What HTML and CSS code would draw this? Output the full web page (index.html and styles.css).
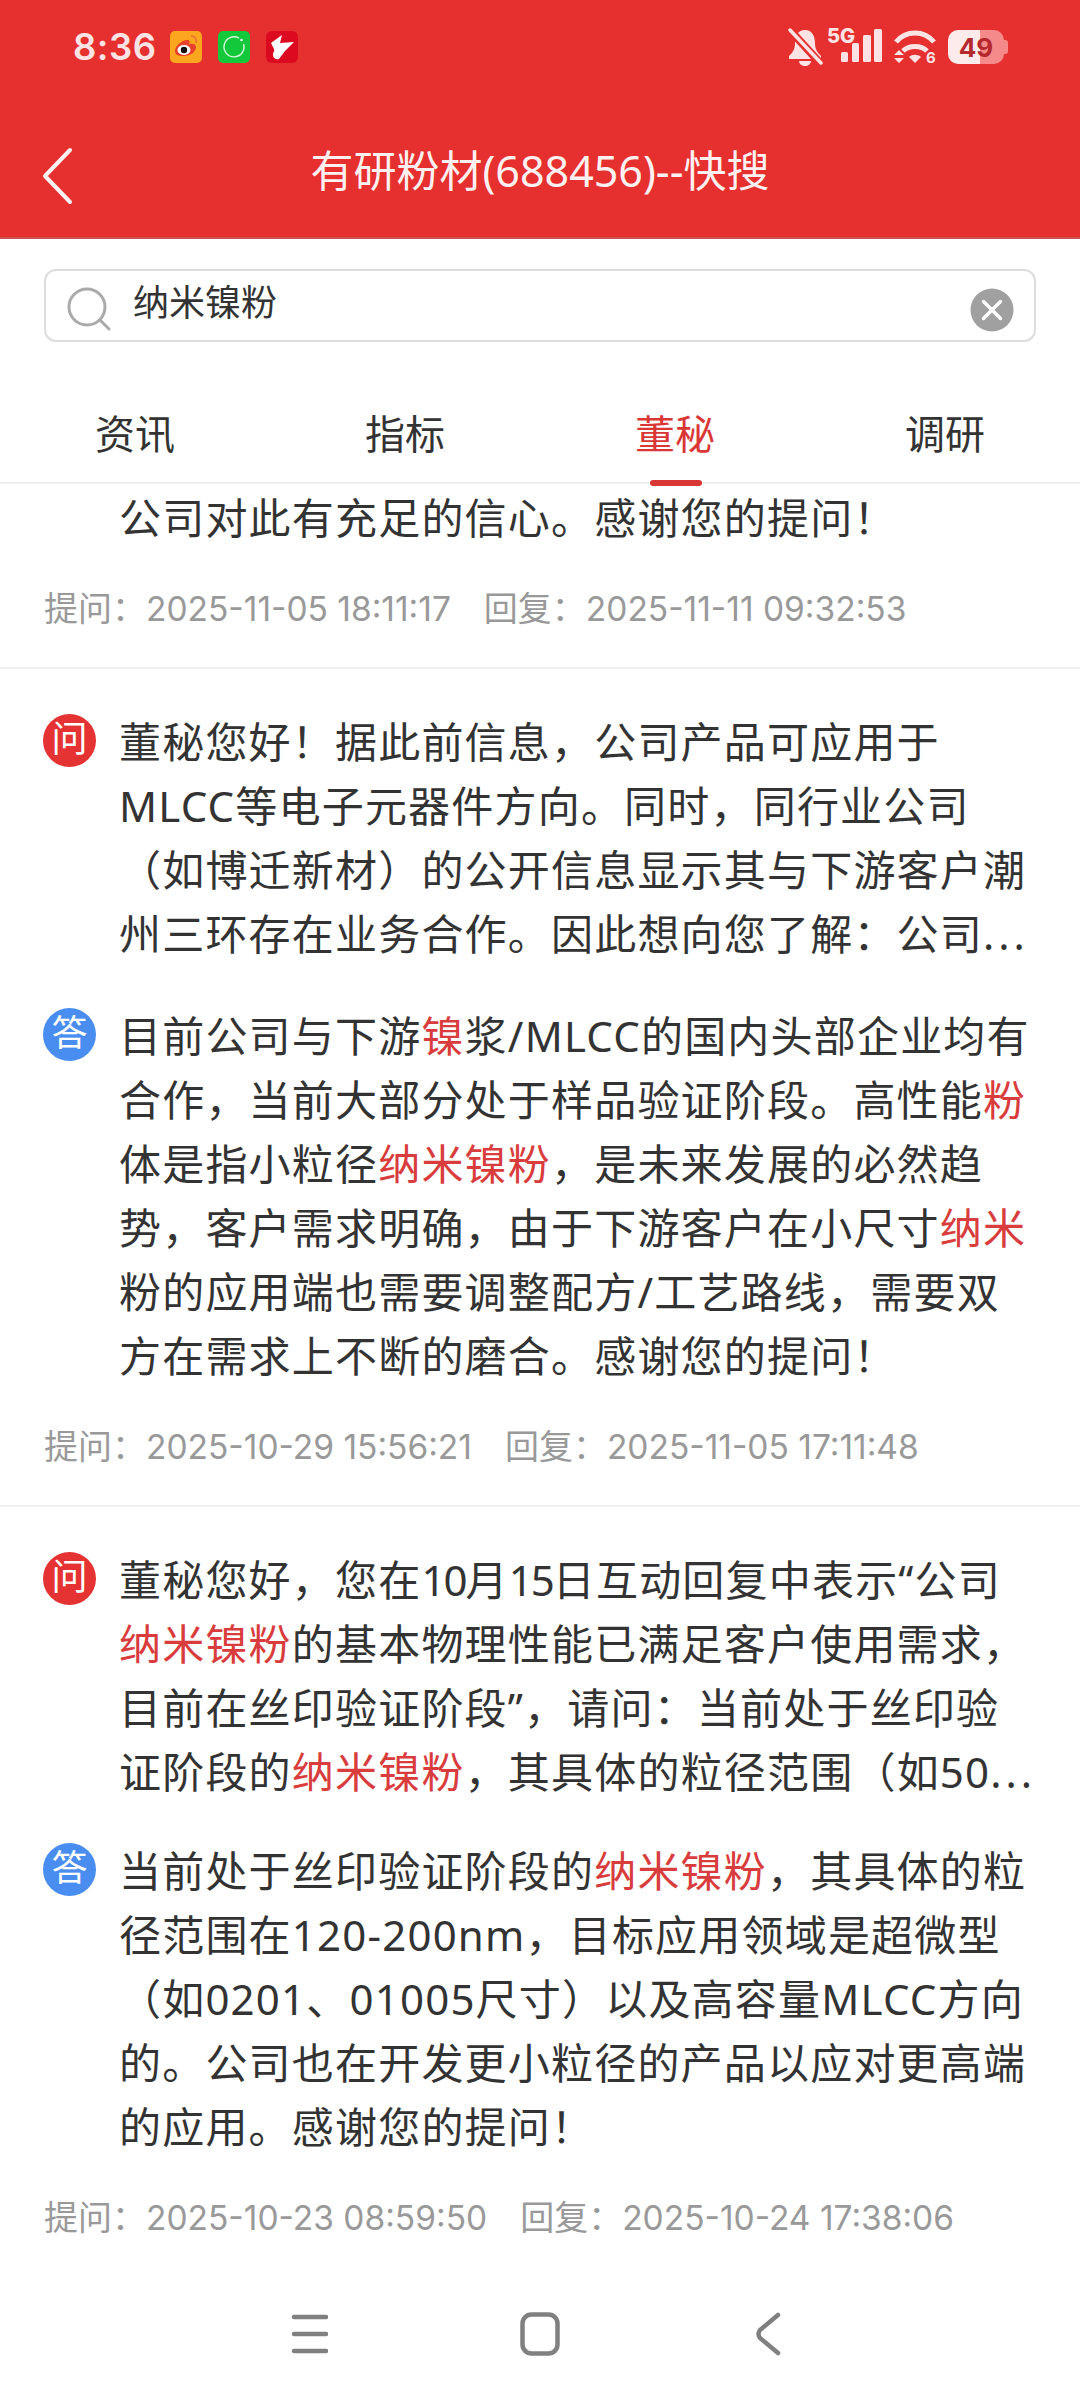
FILE: index.html
```html
<!DOCTYPE html>
<html lang="zh-CN">
  <head>
    <meta charset="utf-8" />
    <title>有研粉材(688456)--快搜</title>
    <link rel="stylesheet" href="styles.css">
  </head>
  <body>
    <header class="app-bar">
      <div class="status-bar">
        <span class="time">8:36</span>
        <div class="app-icons">
          <svg width="32" height="32" viewBox="0 0 32 32">
            <rect width="32" height="32" rx="5" fill="#fca51f"/>
            <path d="M5 20c0-5 7-11 12-11 3 0 3 2 2 4 4-1 7 0 7 3 0 5-6 9-12 9S5 24 5 20z" fill="#e8402c"/>
            <ellipse cx="14" cy="19" rx="6.5" ry="5" fill="#fff"/>
            <circle cx="14" cy="19" r="3.2" fill="#111"/>
            <path d="M21 5c4 0 6 3 5 7" fill="none" stroke="#ee7a2a" stroke-width="2"/>
          </svg>
          <svg width="32" height="32" viewBox="0 0 32 32">
            <rect width="32" height="32" rx="5" fill="#14c83c"/>
            <path d="M21 7.2A10 10 0 1 0 25.6 13" fill="none" stroke="#d4fadc" stroke-width="1.4"/>
            <circle cx="23.5" cy="9" r="1.3" fill="#e4fce9"/>
          </svg>
          <svg width="32" height="32" viewBox="0 0 32 32">
            <rect width="32" height="32" rx="6" fill="#dc0a20"/>
            <path d="M5 12l11-8-2 8 14-1-9 9-6 8c-3 1-6-1-6-4 0-3 2-4 1-6z" fill="#fff"/>
          </svg>
        </div>
        <div class="status-icons">
          <svg width="36" height="38" viewBox="0 0 36 38">
            <path d="M18 2c-7 0-10 6-10 13 0 6-2 9-6 13v3h32v-3c-4-4-6-7-6-13 0-7-3-13-10-13z" fill="#fde3e3"/>
            <path d="M12 33h12c0 3-3 5-6 5s-6-2-6-5z" fill="#fde3e3"/>
            <path d="M2 1l32 35" stroke="#e62f2f" stroke-width="8"/>
            <path d="M3 2l31 33" stroke="#fde3e3" stroke-width="3.5" stroke-linecap="round"/>
          </svg>
          <svg class="signal" width="56" height="48" viewBox="0 -5 56 48">
            <text x="0" y="15" class="net-label">5G</text>
            <rect x="14" y="24" width="7" height="10" rx="1.5"/>
            <rect x="25" y="15" width="7" height="19" rx="1.5"/>
            <rect x="36" y="7" width="8" height="27" rx="1.5"/>
            <rect x="47" y="1" width="8" height="33" rx="1.5"/>
          </svg>
          <svg class="wifi" width="46" height="38" viewBox="0 0 46 38">
            <path d="M3 14C13 2 31 2 41 14" fill="none" stroke="#fde3e3" stroke-width="5"/>
            <path d="M10 23C16 17 28 17 34 23" fill="none" stroke="#fde3e3" stroke-width="5"/>
            <path d="M16 29c3-3 9-3 12 0l-6 6z" fill="#fde3e3"/>
            <path d="M1 27l5-5 5 5zM1 30l5 5 5-5z" fill="#fde3e3"/>
            <text x="33" y="35" class="wifi-label">6</text>
          </svg>
          <div class="battery">
            <span class="battery-text">49</span>
          </div>
        </div>
      </div>
      <div class="toolbar">
        <svg class="back" width="34" height="60" viewBox="0 0 34 60">
          <path d="M30 4L5 30l25 26" fill="none" stroke="#fdf0f0" stroke-width="4" stroke-linecap="round" stroke-linejoin="round"/>
        </svg>
        <h1>有研粉材(688456)--快搜</h1>
      </div>
    </header>

    <div class="search-wrap">
      <div class="search-box">
        <svg width="46" height="46" viewBox="0 0 46 46">
          <circle cx="20" cy="20" r="18" fill="none" stroke="#aaa" stroke-width="3"/>
          <path d="M33 33l9 9" stroke="#aaa" stroke-width="3" stroke-linecap="round"/>
        </svg>
        <span class="search-text">纳米镍粉</span>
        <svg class="clear" width="44" height="44" viewBox="0 0 44 44">
          <circle cx="22" cy="22" r="21.5" fill="#a0a0a0"/>
          <path d="M13.5 13.5l17 17M30.5 13.5l-17 17" stroke="#fff" stroke-width="3.5" stroke-linecap="round"/>
        </svg>
      </div>
    </div>

    <nav class="tabs">
      <div class="tab">资讯</div>
      <div class="tab">指标</div>
      <div class="tab active">董秘</div>
      <div class="tab">调研</div>
    </nav>

    <main class="list">
      <section class="item partial">
        <div class="row">
          <div class="badge-space"></div>
          <p class="text">公司对此有充足的信心。感谢您的提问！</p>
        </div>
        <div class="meta">
          <span>提问：<span class="date">2025-11-05 18:11:17</span></span>
          <span>回复：<span class="date">2025-11-11 09:32:53</span></span>
        </div>
      </section>

      <section class="item">
        <div class="row">
          <div class="badge ask">问</div>
          <p class="text">董秘您好！据此前信息，公司产品可应用于<br>MLCC等电子元器件方向。同时，同行业公司<br>（如博迁新材）的公开信息显示其与下游客户潮<br>州三环存在业务合作。因此想向您了解：公司<span class="dots">...</span></p>
        </div>
        <div class="row answer">
          <div class="badge reply">答</div>
          <p class="text">目前公司与下游<em>镍</em>浆/MLCC的国内头部企业均有<br>合作，当前大部分处于样品验证阶段。高性能<em>粉</em><br>体是指小粒径<em>纳米镍粉</em>，是未来发展的必然趋<br>势，客户需求明确，由于下游客户在小尺寸<em>纳米</em><br>粉的应用端也需要调整配方/工艺路线，需要双<br>方在需求上不断的磨合。感谢您的提问！</p>
        </div>
        <div class="meta">
          <span>提问：<span class="date">2025-10-29 15:56:21</span></span>
          <span>回复：<span class="date">2025-11-05 17:11:48</span></span>
        </div>
      </section>

      <section class="item last">
        <div class="row">
          <div class="badge ask">问</div>
          <p class="text">董秘您好，您在<span class="tight">10</span>月<span class="tight">15</span>日互动回复中表示“公司<br><em>纳米镍粉</em>的基本物理性能已满足客户使用需求，<br>目前在丝印验证阶段”，请问：当前处于丝印验<br>证阶段的<em>纳米镍粉</em>，其具体的粒径范围（如50<span class="dots">...</span></p>
        </div>
        <div class="row answer">
          <div class="badge reply">答</div>
          <p class="text">当前处于丝印验证阶段的<em>纳米镍粉</em>，其具体的粒<br>径范围在120-200nm，目标应用领域是超微型<br>（如0201、01005尺寸）以及高容量MLCC方向<br>的。公司也在开发更小粒径的产品以应对更高端<br>的应用。感谢您的提问！</p>
        </div>
        <div class="meta">
          <span>提问：<span class="date">2025-10-23 08:59:50</span></span>
          <span>回复：<span class="date">2025-10-24 17:38:06</span></span>
        </div>
      </section>
    </main>

    <footer class="nav-bar">
      <svg width="38" height="40" viewBox="0 0 38 40">
        <path d="M4 3h32M4 20h32M4 37h32" stroke="#808080" stroke-width="4.5" stroke-linecap="round"/>
      </svg>
      <svg width="40" height="44" viewBox="0 0 40 44">
        <rect x="2.5" y="2.5" width="35" height="39" rx="9" fill="none" stroke="#808080" stroke-width="4.5"/>
      </svg>
      <svg class="nav-back" width="26" height="44" viewBox="0 0 26 44">
        <path d="M23 3L5 18q-3 4 0 8l18 15" fill="none" stroke="#808080" stroke-width="4.5" stroke-linecap="round"/>
      </svg>
    </footer>
  </body>
</html>
```

FILE: styles.css
```css
* {
  box-sizing: border-box;
}
html, body {
  margin: 0;
  padding: 0;
  width: 1080px;
  height: 2400px;
  overflow: hidden;
}
body {
  display: flex;
  flex-direction: column;
  background: #fff;
  color: #333;
  font-family: "Noto Sans", "Noto Sans CJK SC", sans-serif;
}
p, h1 {
  margin: 0;
  font-weight: normal;
}

/* red top area */
.app-bar {
  height: 239px;
  background: #e62f2f;
  border-bottom: 2px solid #c9544f;
}
.status-bar {
  height: 94px;
  display: flex;
  align-items: center;
  padding-left: 73px;
}
.time {
  width: 97px;
  font-family: Inter, sans-serif;
  font-weight: 600;
  font-size: 36.5px;
  letter-spacing: 0.5px;
  color: #fde3e3;
}
.app-icons {
  display: flex;
  gap: 16px;
}
.status-icons {
  margin-left: auto;
  margin-right: 72px;
  display: flex;
  align-items: center;
}
.signal {
  margin-left: 4px;
}
.signal rect {
  fill: #fde3e3;
}
.wifi {
  margin-left: 10px;
}
.net-label {
  font-family: Inter, sans-serif;
  font-weight: 800;
  font-size: 20px;
  fill: #fde3e3;
}
.wifi-label {
  font-family: Inter, sans-serif;
  font-weight: 700;
  font-size: 15px;
  fill: #fde3e3;
}
.battery {
  position: relative;
  width: 56px;
  height: 34px;
  margin-left: 9px;
  margin-right: 4px;
  border-radius: 10px;
  background: linear-gradient(to right, #fdeaea 32px, #f58a8a 32px);
  display: flex;
  align-items: center;
  justify-content: center;
}
.battery::after {
  content: "";
  position: absolute;
  right: -4px;
  top: 10px;
  width: 4px;
  height: 14px;
  border-radius: 0 3px 3px 0;
  background: #f58a8a;
}
.battery-text {
  font-family: Inter, sans-serif;
  font-weight: 700;
  font-size: 26px;
  color: #b5282e;
}
.toolbar {
  position: relative;
  height: 143px;
  display: flex;
  align-items: center;
  justify-content: center;
  padding-top: 6px;
}
.back {
  position: absolute;
  left: 40px;
  top: 52px;
}
.toolbar h1 {
  font-size: 43px;
  color: #fdf0f0;
}

/* search */
.search-wrap {
  padding: 30px 44px 0;
}
.search-box {
  height: 73px;
  border: 2px solid #ddd;
  border-radius: 12px;
  display: flex;
  align-items: center;
  padding: 0 20px 0 21px;
}
.search-box svg {
  margin-top: 8px;
}
.search-text {
  margin-left: 20px;
  font-size: 36px;
  line-height: 1;
  margin-bottom: 6px;
  color: #333;
}
.clear {
  margin-left: auto;
}

/* tabs */
.tabs {
  height: 142px;
  display: grid;
  grid-template-columns: repeat(4, 1fr);
  border-bottom: 2px solid #f0f0f0;
}
.tab {
  position: relative;
  padding-top: 66px;
  text-align: center;
  font-size: 40px;
  line-height: 52px;
  color: #333;
}
.tab.active {
  color: #d93636;
}
.tab.active::after {
  content: "";
  position: absolute;
  left: 110px;
  bottom: -4px;
  width: 52px;
  height: 6px;
  border-radius: 3px;
  background: #d93636;
}

/* list */
.list {
  flex: 1;
  overflow: hidden;
}
.item {
  padding: 41px 0 36px;
  border-bottom: 2px solid #f0f0f0;
}
.item.partial {
  padding-top: 0;
  margin-top: 2px;
}
.item.last {
  border-bottom: none;
}
.row {
  display: flex;
  padding-left: 43px;
}
.answer {
  margin-top: 38px;
}
.item.last .answer {
  margin-top: 35px;
}
.badge, .badge-space {
  flex: none;
  width: 53px;
  height: 53px;
  margin: 4px 23px 0 0;
}
.badge {
  border-radius: 50%;
  color: #fff;
  font-size: 36px;
  line-height: 50px;
  text-align: center;
}
.badge.ask {
  background: #e53333;
}
.badge.reply {
  background: #4a8df0;
}
.text {
  font-size: 42px;
  line-height: 64px;
  letter-spacing: 1.2px;
  white-space: nowrap;
}
.text em {
  font-style: normal;
  color: #d83c3c;
}
.tight {
  letter-spacing: -2px;
}
.dots {
  letter-spacing: 4px;
}
.meta {
  margin-top: 31px;
  padding-left: 44px;
  display: flex;
  gap: 33px;
  height: 50px;
  align-items: center;
  font-size: 34px;
  color: #999;
}
.date {
  font-family: Inter, sans-serif;
  font-size: 33.5px;
}

/* system nav */
.nav-bar {
  height: 128px;
  flex: none;
  display: flex;
  justify-content: center;
  align-items: center;
  gap: 192px;
  padding-bottom: 4px;
  padding-right: 10px;
}
.nav-back {
  margin-left: 3px;
}
```
